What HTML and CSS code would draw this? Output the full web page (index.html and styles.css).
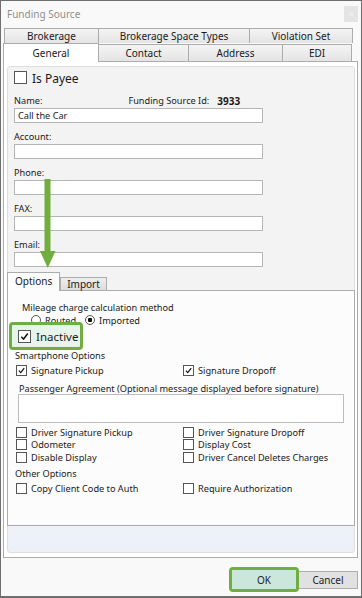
FILE: index.html
```html
<!DOCTYPE html>
<html>
<head>
  <title>Funding Source</title>
  <link rel="stylesheet" href="styles.css">
</head>
<body>
  <div class="window">
    <div class="titlebar">
      <span class="title">Funding Source</span>
      <span class="close">&#x2715;</span>
    </div>

    <div class="tabstrip">
      <div class="tabrow">
        <div class="tab" style="width:95px">Brokerage</div>
        <div class="tab" style="width:152px">Brokerage Space Types</div>
        <div class="tab" style="width:104px">Violation Set</div>
      </div>
      <div class="tabrow front">
        <div class="tab active" style="width:96px">General</div>
        <div class="tab" style="width:91px">Contact</div>
        <div class="tab" style="width:95px">Address</div>
        <div class="tab" style="width:70px">EDI</div>
      </div>
    </div>

    <div class="panel">
      <div class="general">
        <div class="payee"><span class="cb big"></span>Is Payee</div>

        <div class="field">
          <div class="label-row">
            <span>Name:</span>
            <span class="id-label">Funding Source Id:</span>
            <b class="id-value">3933</b>
          </div>
          <div class="input">Call the Car</div>
        </div>
        <div class="field">
          <div class="label-row">Account:</div>
          <div class="input"></div>
        </div>
        <div class="field">
          <div class="label-row">Phone:</div>
          <div class="input"></div>
        </div>
        <div class="field">
          <div class="label-row">FAX:</div>
          <div class="input"></div>
        </div>
        <div class="field">
          <div class="label-row">Email:</div>
          <div class="input"></div>
        </div>

        <div class="subtabs">
          <div class="subtab active">Options</div>
          <div class="subtab">Import</div>
        </div>
        <div class="options">
          <div class="mileage">Mileage charge calculation method</div>
          <div class="radios">
            <span class="radio"></span><span class="radio-text">Routed</span>
            <span class="radio on"></span><span class="radio-text">Imported</span>
          </div>
          <div class="callout inactive">
            <span class="cb big checked"><svg viewBox="0 0 12 12"><path d="M2.5 6.2 L5 8.8 L9.6 2.8" /></svg></span>Inactive
          </div>

          <div class="heading">Smartphone Options</div>
          <div class="grid">
            <div class="check"><span class="cb checked"><svg viewBox="0 0 12 12"><path d="M2.5 6.2 L5 8.8 L9.6 2.8" /></svg></span>Signature Pickup</div>
            <div class="check"><span class="cb checked"><svg viewBox="0 0 12 12"><path d="M2.5 6.2 L5 8.8 L9.6 2.8" /></svg></span>Signature Dropoff</div>
          </div>
          <div class="agreement">Passenger Agreement (Optional message displayed before signature)</div>
          <div class="textarea"></div>
          <div class="grid rows">
            <div class="check"><span class="cb"></span>Driver Signature Pickup</div>
            <div class="check"><span class="cb"></span>Driver Signature Dropoff</div>
            <div class="check"><span class="cb"></span>Odometer</div>
            <div class="check"><span class="cb"></span>Display Cost</div>
            <div class="check"><span class="cb"></span>Disable Display</div>
            <div class="check"><span class="cb"></span>Driver Cancel Deletes Charges</div>
          </div>

          <div class="heading other">Other Options</div>
          <div class="grid">
            <div class="check"><span class="cb"></span>Copy Client Code to Auth</div>
            <div class="check"><span class="cb"></span>Require Authorization</div>
          </div>
        </div>
      </div>
    </div>

    <div class="footer">
      <div class="callout ok-callout"><button class="btn ok">OK</button></div>
      <button class="btn">Cancel</button>
    </div>

    <!-- annotation arrow -->
    <svg class="arrow" viewBox="0 0 16 90">
      <rect x="4.5" y="0" width="6" height="74" />
      <polygon points="0,72 15.5,72 7.75,89" />
    </svg>
  </div>
</body>
</html>
```

FILE: styles.css
```css
* {
  box-sizing: border-box;
}
body {
  margin: 0;
  font-family: "Noto Sans", "Open Sans", sans-serif;
  font-size: 9.2px;
  color: #1a1a1a;
  background-color: #fff;
}
.window {
  position: relative;
  width: 362px;
  height: 598px;
  border: 1px solid #6f6f6f;
  border-bottom-width: 2px;
  background-color: #f9f9f9;
}
.titlebar {
  display: flex;
  justify-content: space-between;
  align-items: center;
  height: 27px;
  padding: 0 3px 2px 6px;
}
.title {
  color: #8f8f8f;
  font-size: 10px;
}
.close {
  width: 14px;
  height: 16px;
  background-color: #e4e4e4;
  color: #f2f2f2;
  font-size: 8px;
  text-align: center;
  line-height: 16px;
}

/* tabs */
.tabstrip {
  padding-left: 3px;
}
.tabrow {
  display: flex;
  height: 15px;
}
.tabrow.front {
  height: 18px;
  margin-left: -1px;
}
.tab {
  display: flex;
  align-items: center;
  justify-content: center;
  height: 15px;
  margin-right: -1px;
  border: 1px solid #acacac;
  border-bottom: none;
  background: linear-gradient(#f4f4f4, #e4e4e4);
  font-size: 10px;
}
.front .tab {
  height: 17px;
  margin-top: 1px;
}
.front .tab.active {
  position: relative;
  z-index: 1;
  height: 19px;
  margin-top: 0;
  background: #fff;
}

.panel {
  width: 355px;
  height: 497px;
  margin-left: 2px;
  border: 1px solid #acacac;
  background-color: #fff;
  padding: 4px 2px 4px 3px;
}
.general {
  height: 100%;
  padding: 4px 0 0 6px;
  border: 1px solid #dedede;
  border-radius: 3px;
  background: linear-gradient(#f3f3f3 60%, #ecf0f8);
}

/* checkboxes */
.cb {
  display: inline-block;
  flex: none;
  position: relative;
  width: 11px;
  height: 11px;
  margin-right: 4px;
  border: 1px solid #555;
  background-color: #fff;
  vertical-align: -2px;
}
.cb.big {
  width: 13px;
  height: 13px;
  margin-right: 5px;
  vertical-align: -1px;
}
.cb svg {
  position: absolute;
  left: 0;
  top: 0;
  width: 100%;
  height: 100%;
  fill: none;
  stroke: #111;
  stroke-width: 1.6;
}

.payee {
  height: 16px;
  font-size: 12px;
  line-height: 16px;
}

.field {
  margin-top: 8px;
}
.label-row {
  display: flex;
  height: 12px;
  line-height: 12px;
  margin-bottom: 1px;
}
.id-label {
  margin-left: 86px;
}
.id-value {
  margin-left: 8px;
  font-size: 10px;
  font-weight: bold;
}
.input {
  width: 249px;
  height: 15px;
  padding-left: 3px;
  border: 1px solid #b5b5b5;
  background-color: #fff;
  line-height: 13px;
}

/* inner tabs */
.subtabs {
  display: flex;
  align-items: flex-end;
  height: 18px;
  margin: 5px 0 0 -7px;
}
.subtab {
  height: 13px;
  padding: 0 6px;
  border: 1px solid #acacac;
  border-bottom: none;
  background: linear-gradient(#eeeeee, #dcdcdc);
  line-height: 12px;
  font-size: 10px;
}
.subtab.active {
  position: relative;
  z-index: 1;
  height: 19px;
  margin-bottom: -1px;
  padding: 0 7px;
  background: #fcfcfc;
  line-height: 16px;
}
.options {
  height: 236px;
  margin: 0 -1px 0 -7px;
  padding-top: 11px;
  border: 1px solid #acacac;
  background-color: #fcfcfc;
}
.mileage {
  height: 12px;
  line-height: 12px;
  padding-left: 14px;
}
.radios {
  display: flex;
  align-items: center;
  height: 12px;
  padding-left: 23px;
}
.radio {
  width: 10px;
  height: 10px;
  margin-right: 4px;
  border: 1px solid #555;
  border-radius: 50%;
  background-color: #fff;
}
.radio.on {
  background: radial-gradient(circle, #111 0 2px, #fff 2.5px);
}
.radio-text {
  margin-right: 9px;
}
.callout {
  border: 3px solid #6fae3f;
  border-radius: 4px;
}
.inactive {
  position: relative;
  display: flex;
  align-items: center;
  width: 74px;
  height: 28px;
  margin: -4px 0 0 1px;
  padding-left: 6px;
  background-color: #e6f4ec;
  font-size: 11.5px;
  white-space: nowrap;
}
.heading {
  height: 12px;
  padding-left: 7px;
  line-height: 12px;
}
.heading.other {
  margin-top: 4px;
}
.grid {
  display: grid;
  grid-template-columns: 167px 1fr;
  padding-left: 8px;
  margin-top: 3px;
}
.grid.rows {
  margin-top: 4px;
}
.check {
  height: 12.5px;
  line-height: 12.5px;
  white-space: nowrap;
}
.agreement {
  height: 11px;
  margin-top: 5px;
  padding-left: 11px;
  line-height: 11px;
}
.textarea {
  width: 326px;
  height: 29px;
  margin-left: 10px;
  border: 1px solid #bdbdbd;
  background-color: #fff;
}

/* buttons */
.footer {
  display: flex;
  justify-content: flex-end;
  align-items: center;
  margin-top: 9px;
  padding-right: 3px;
}
.btn {
  height: 18px;
  border: 1px solid #adadad;
  background-color: #e1e1e1;
  font-family: inherit;
  font-size: 10px;
  color: #1e1e1e;
  padding: 0;
}
.footer > .btn {
  width: 60px;
}
.ok-callout {
  width: 70px;
  height: 25px;
  position: relative;
  z-index: 1;
  margin-right: -1px;
}
.btn.ok {
  display: block;
  width: 100%;
  height: 100%;
  border: none;
  background-color: #cbe7dc;
}

.arrow {
  position: absolute;
  left: 39px;
  top: 178px;
  width: 16px;
  height: 90px;
  fill: #6fae3f;
}
```
